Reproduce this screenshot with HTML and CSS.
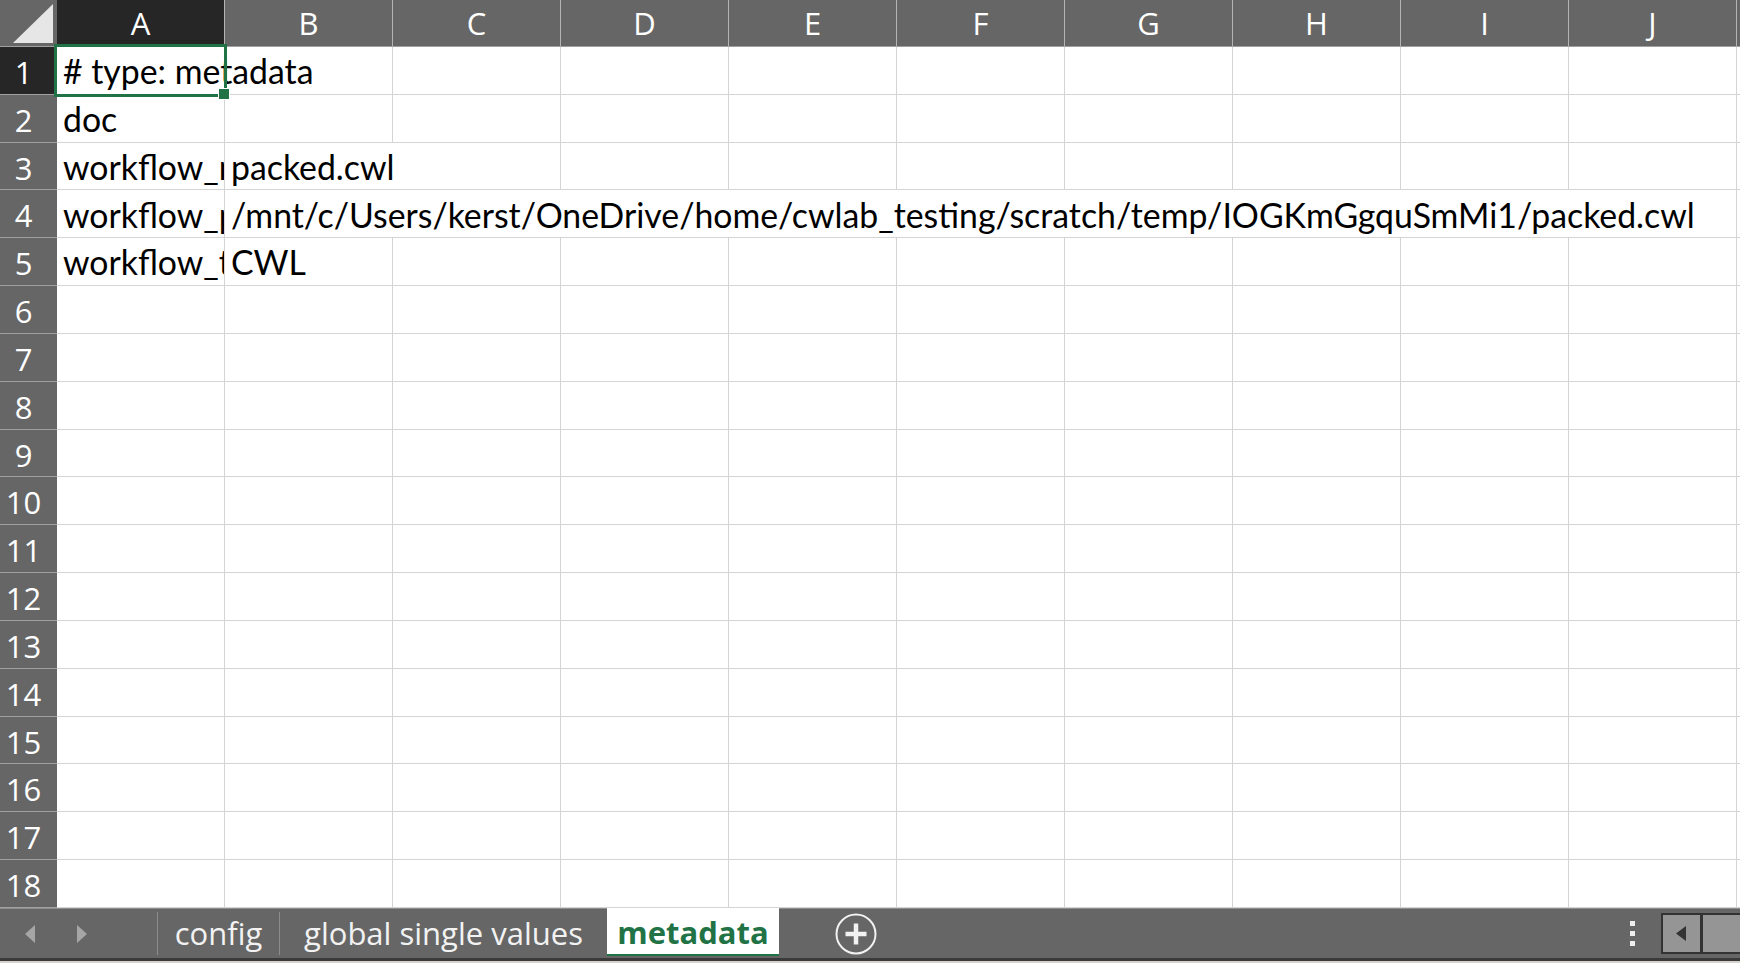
FILE: index.html
```html
<!DOCTYPE html>
<html lang="en">
<head>
    <meta charset="UTF-8">
    <title>metadata</title>
    <link rel="stylesheet" href="styles.css">
</head>
<body>
    <div class="app">
        <div class="sheet" id="sheet">
            <div class="row head">
                <div class="corner">
                    <svg width="57" height="46" viewBox="0 0 57 46"><polygon points="13,43 53,43 53,4" fill="#e6e6e6"/></svg>
                </div>
                <div class="col-head active">A</div>
                <div class="col-head">B</div>
                <div class="col-head">C</div>
                <div class="col-head">D</div>
                <div class="col-head">E</div>
                <div class="col-head">F</div>
                <div class="col-head">G</div>
                <div class="col-head">H</div>
                <div class="col-head">I</div>
                <div class="col-head">J</div>
                <div class="col-head last"></div>
            </div>
            <div class="row">
                <div class="row-head active">1</div>
                <div class="cell span-2">
                    # type: metadata</div>
                <div class="cell"></div><div class="cell"></div><div class="cell"></div><div class="cell"></div>
                <div class="cell"></div><div class="cell"></div><div class="cell"></div><div class="cell"></div>
                <div class="cell last"></div>
            </div>
            <div class="row">
                <div class="row-head">2</div>
                <div class="cell">doc</div>
                <div class="cell"></div><div class="cell"></div><div class="cell"></div><div class="cell"></div><div class="cell"></div>
                <div class="cell"></div><div class="cell"></div><div class="cell"></div><div class="cell"></div>
                <div class="cell last"></div>
            </div>
            <div class="row">
                <div class="row-head">3</div>
                <div class="cell">workflow_name</div>
                <div class="cell span-2">packed.cwl</div>
                <div class="cell"></div><div class="cell"></div><div class="cell"></div><div class="cell"></div>
                <div class="cell"></div><div class="cell"></div><div class="cell"></div>
                <div class="cell last"></div>
            </div>
            <div class="row">
                <div class="row-head">4</div>
                <div class="cell">workflow_path</div>
                <div class="cell span-9">/mnt/c/Users/kerst/OneDrive/home/cwlab_testing/scratch/temp/IOGKmGgquSmMi1/packed.cwl</div>
                <div class="cell last"></div>
            </div>
            <div class="row">
                <div class="row-head">5</div>
                <div class="cell">workflow_type</div>
                <div class="cell">CWL</div>
                <div class="cell"></div><div class="cell"></div><div class="cell"></div><div class="cell"></div>
                <div class="cell"></div><div class="cell"></div><div class="cell"></div><div class="cell"></div>
                <div class="cell last"></div>
            </div>
        </div>

        <div class="selection"><span class="handle"></span></div>

        <div class="tabbar">
            <div class="nav">
                <svg width="12" height="20" viewBox="0 0 12 20"><polygon points="11,1 11,19 1,10" fill="#a6a6a6"/></svg>
                <svg width="12" height="20" viewBox="0 0 12 20"><polygon points="1,1 1,19 11,10" fill="#a6a6a6"/></svg>
            </div>
            <div class="tab tab-config">config</div>
            <div class="tab tab-global">global single values</div>
            <div class="tab tab-active">metadata</div>
            <div class="add-sheet">
                <svg width="44" height="44" viewBox="0 0 44 44">
                    <circle cx="22" cy="22" r="19.5" fill="none" stroke="#f2f2f2" stroke-width="2"/>
                    <path d="M22 11.5v21M11.5 22h21" stroke="#f2f2f2" stroke-width="4.5"/>
                </svg>
            </div>
            <div class="spacer"></div>
            <div class="more"><span></span><span></span><span></span></div>
            <div class="hscroll">
                <div class="scroll-btn">
                    <svg width="12" height="16" viewBox="0 0 12 16"><polygon points="11,0 11,15 1,7.5" fill="#333"/></svg>
                </div>
                <div class="scroll-track"></div>
            </div>
        </div>
        <div class="edge"></div>
    </div>

    <script>
        // empty rows 6..18
        const sheet = document.getElementById('sheet');
        for (let r = 6; r <= 18; r++) {
            const row = document.createElement('div');
            row.className = 'row';
            let html = '<div class="row-head">' + r + '</div>';
            for (let c = 0; c < 10; c++) html += '<div class="cell"></div>';
            html += '<div class="cell last"></div>';
            row.innerHTML = html;
            sheet.appendChild(row);
        }
    </script>
</body>
</html>
```

FILE: styles.css
```css
body {
    margin: 0;
    background-color: #ffffff;
    overflow: hidden;
}
.app {
    position: relative;
    width: 1740px;
    height: 963px;
    display: flex;
    flex-direction: column;
    overflow: hidden;
}
.sheet {
    height: 908px;
    display: grid;
    grid-template-rows: 47px repeat(18, 1fr);
    flex-shrink: 0;
}
.row {
    display: grid;
    grid-template-columns: 57px repeat(10, 168px) 1fr;
    min-height: 0;
}
.corner {
    background-color: #666666;
    border-bottom: 1px solid #a0a0a0;
}
.corner svg {
    display: block;
}
.col-head {
    background-color: #666666;
    color: #ffffff;
    font-family: "Open Sans", "Noto Sans", sans-serif;
    font-size: 31px;
    line-height: 46px;
    text-align: center;
    border-right: 1px solid #b4b4b4;
    border-bottom: 1px solid #a0a0a0;
}
.col-head.active {
    background-color: #262626;
}
.col-head.last {
    border-right: none;
}
.row-head {
    background-color: #666666;
    color: #ffffff;
    font-family: "Open Sans", "Noto Sans", sans-serif;
    font-size: 31px;
    text-align: center;
    padding: 3px 10px 0 0;
    border-bottom: 1px solid #a0a0a0;
    display: flex;
    align-items: center;
    justify-content: center;
    overflow: hidden;
}
.row-head.active {
    background-color: #262626;
}
.cell {
    box-sizing: border-box;
    border-right: 1px solid #d4d4d4;
    border-bottom: 1px solid #d4d4d4;
    font-family: Lato, "Open Sans", sans-serif;
    font-size: 33.8px;
    line-height: 1;
    color: #000000;
    padding: 0 0 5px 6px;
    display: flex;
    align-items: flex-end;
    white-space: nowrap;
    overflow: hidden;
    min-width: 0;
}
.cell.last {
    border-right: none;
}
.span-2 {
    grid-column: span 2;
}
.span-9 {
    grid-column: span 9;
}
.selection {
    position: absolute;
    left: 54px;
    top: 44px;
    width: 173px;
    height: 53px;
    box-sizing: border-box;
    border: 3px solid #217346;
}
.handle {
    position: absolute;
    right: -6px;
    bottom: -6px;
    width: 10px;
    height: 10px;
    background-color: #217346;
    border: 1px solid #ffffff;
}
.tabbar {
    height: 49px;
    flex-shrink: 0;
    background-color: #666666;
    border-top: 1px solid #8f8f8f;
    display: flex;
    align-items: stretch;
    font-family: "Open Sans", "Noto Sans", sans-serif;
    font-size: 31px;
    color: #f2f2f2;
}
.nav {
    width: 158px;
    display: flex;
    align-items: center;
    gap: 40px;
    padding-left: 24px;
    box-sizing: border-box;
    border-right: 1px solid #8c8c8c;
    margin: 3px 0 3px 0;
}
.tab {
    line-height: 42px;
    text-align: center;
    white-space: nowrap;
    margin: 3px 0;
}
.tab-config {
    width: 121px;
    border-right: 1px solid #8c8c8c;
}
.tab-global {
    width: 327px;
}
.tab-active {
    width: 172px;
    margin: -1px 0 3px 0;
    padding-top: 4px;
    background-color: #ffffff;
    color: #217346;
    font-weight: bold;
    border-bottom: 2px solid #217346;
    box-sizing: border-box;
    height: 48px;
    line-height: 40px;
}
.add-sheet {
    margin-left: 55px;
    display: flex;
    align-items: center;
}
.add-sheet svg {
    display: block;
}
.spacer {
    flex: 1;
}
.more {
    width: 5px;
    margin-right: 26px;
    display: flex;
    flex-direction: column;
    justify-content: center;
    gap: 5px;
}
.more span {
    display: block;
    width: 5px;
    height: 5px;
    background-color: #eeeeee;
}
.hscroll {
    width: 77px;
    margin: 4px 0 4px 0;
    display: flex;
    background-color: #333333;
    padding: 2px 0 2px 2px;
    gap: 3px;
}
.scroll-btn {
    width: 37px;
    background-color: #959595;
    display: flex;
    align-items: center;
    padding-left: 12px;
    box-sizing: border-box;
}
.scroll-track {
    flex: 1;
    background-color: #959595;
}
.edge {
    height: 3px;
    background-color: #3a3a3a;
    border-bottom: 2px solid #d6d3ce;
    flex-shrink: 0;
}
```
